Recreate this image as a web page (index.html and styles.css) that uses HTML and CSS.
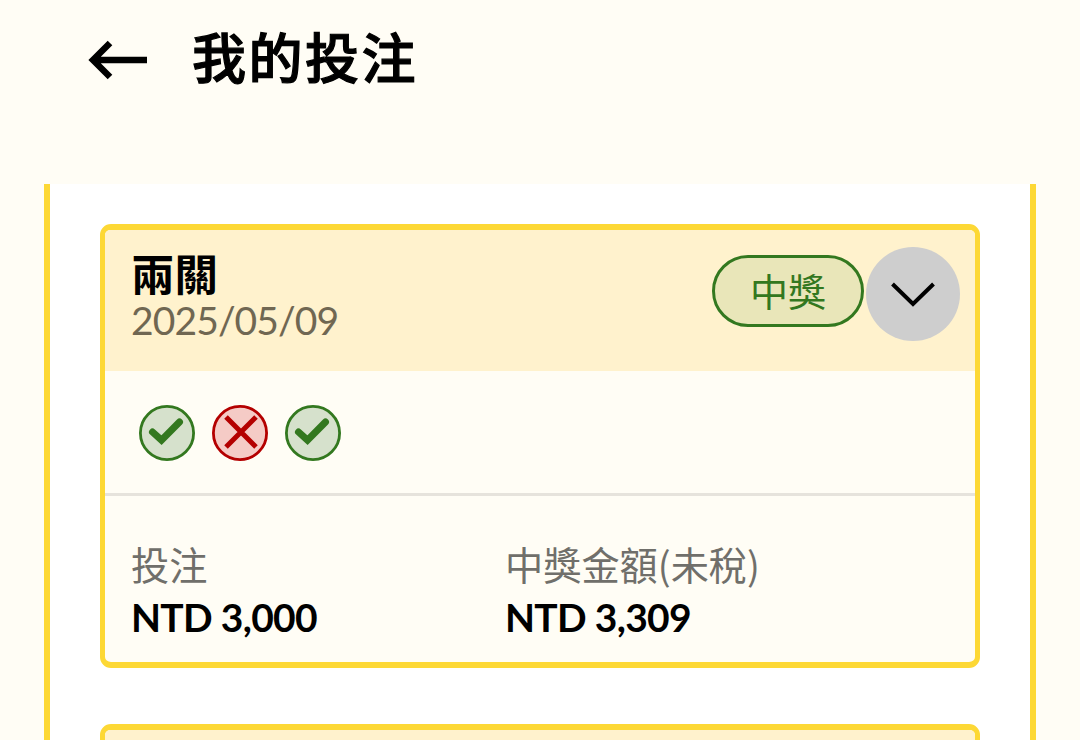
FILE: index.html
```html
<!DOCTYPE html>
<html lang="zh-Hant">
    <head>
        <meta charset="UTF-8" />
        <title>我的投注</title>
        <link rel="stylesheet" href="styles.css">
    </head>
    <body>
        <header class="top">
            <svg class="back" viewBox="0 0 60 40">
                <path d="M22 3 L5 20 L22 37 M5 20 H59" />
            </svg>
            <h1>我的投注</h1>
        </header>

        <main class="list">
            <section class="card">
                <div class="card-head">
                    <div class="info">
                        <h2>兩關</h2>
                        <p class="date">2025/05/09</p>
                    </div>
                    <span class="badge">中獎</span>
                    <button class="toggle">
                        <svg viewBox="0 0 44 26"><path d="M1.500 3 L22 23 L42.500 3" /></svg>
                    </button>
                </div>

                <!-- 各關結果 -->
                <div class="result">
                    <svg class="mark win" viewBox="0 0 56 56">
                        <circle cx="28" cy="28" r="26.6" />
                        <path class="check" d="M13.500 27 L22.500 35.200 L40.500 17" />
                    </svg>
                    <svg class="mark lose" viewBox="0 0 56 56">
                        <circle cx="28" cy="28" r="26.6" />
                        <path class="cross" d="M14 12 L44 42 M44 12 L14 42" />
                    </svg>
                    <svg class="mark win" viewBox="0 0 56 56">
                        <circle cx="28" cy="28" r="26.6" />
                        <path class="check" d="M13.500 27 L22.500 35.200 L40.500 17" />
                    </svg>
                </div>

                <!-- 金額 -->
                <div class="money">
                    <div class="col">
                        <p class="label">投注</p>
                        <p class="price">NTD 3,000</p>
                    </div>
                    <div class="col">
                        <p class="label">中獎金額(未稅)</p>
                        <p class="price">NTD 3,309</p>
                    </div>
                </div>
            </section>

            <section class="card">
                <div class="card-head"></div>
            </section>
        </main>
    </body>
</html>
```
FILE: styles.css
```css
* {
    box-sizing: border-box;
    margin: 0;
    padding: 0;
}

body {
    background-color: #fffdf5;
    color: #000;
    font-family: Lato, "Noto Sans CJK TC", sans-serif;
}

/* 標題列 */
.top {
    display: flex;
    align-items: center;
    height: 184px;
    padding: 0 0 64px 88px;
}
.back {
    width: 60px;
    height: 40px;
    margin-right: 44px;
    fill: none;
    stroke: #000;
    stroke-width: 6.5;
}
.top h1 {
    margin-bottom: 3px;
    font-size: 54px;
    font-weight: 500;
    line-height: 78px;
    letter-spacing: 2.5px;
    /* 筆畫加粗一點 */
    -webkit-text-stroke: 1.2px #000;
}

/* 列表 */
.list {
    display: flex;
    flex-direction: column;
    gap: 56px;
    height: 556px;
    margin: 0 44px;
    padding: 40px 50px 0;
    border: solid #fdd835;
    border-width: 0 6px;
    background-color: #fff;
    overflow: hidden;
}
.card {
    flex-shrink: 0;
    border: solid #fdd835;
    border-width: 6px 5px;
    border-radius: 11px;
    background-color: #fffdf5;
}
.card-head {
    display: flex;
    align-items: flex-start;
    height: 141px;
    padding: 16px 15px 0 26px;
    border-radius: 5px 5px 0 0;
    background-color: #fff2cd;
}
.info {
    flex: 1;
}
.info h2 {
    font-size: 43.5px;
    font-weight: 700;
    line-height: 56px;
}
.date {
    font-size: 39px;
    line-height: 36px;
    letter-spacing: -0.9px;
    color: #706752;
}
.badge {
    width: 152px;
    height: 72px;
    margin: 9px 2px 0 0;
    border: 3px solid #33781f;
    border-radius: 36px;
    background-color: #e9e6b9;
    color: #33781f;
    font-size: 38px;
    line-height: 67px;
    text-align: center;
}
.toggle {
    display: flex;
    align-items: center;
    justify-content: center;
    width: 94px;
    height: 94px;
    margin-top: 1px;
    border: 0;
    border-radius: 50%;
    background-color: #cecece;
}
.toggle svg {
    width: 44px;
    height: 26px;
    fill: none;
    stroke: #000;
    stroke-width: 4;
}

/* 結果圖示 */
.result {
    display: flex;
    gap: 17px;
    height: 125px;
    padding: 34px 34px 0;
    border-bottom: 3px solid #e6e3dc;
}
.mark {
    width: 56px;
    height: 56px;
    fill: none;
}
.win circle {
    fill: #d6e1cc;
    stroke: #33781f;
    stroke-width: 2.8;
}
.lose circle {
    fill: #f5cbc6;
    stroke: #b40000;
    stroke-width: 2.8;
}
.check {
    stroke: #33781f;
    stroke-width: 7;
    stroke-linecap: round;
}
.cross {
    stroke: #b40000;
    stroke-width: 5;
}

/* 金額 */
.money {
    display: flex;
    height: 166px;
    padding: 42px 26px 0;
}
.col {
    width: 374px;
}
.label {
    font-family: "Noto Sans CJK TC", sans-serif;
    font-size: 38.2px;
    line-height: 51px;
    color: #706f6a;
}
.price {
    font-size: 39px;
    font-weight: 700;
    line-height: 56px;
    letter-spacing: -0.7px;
}
```
